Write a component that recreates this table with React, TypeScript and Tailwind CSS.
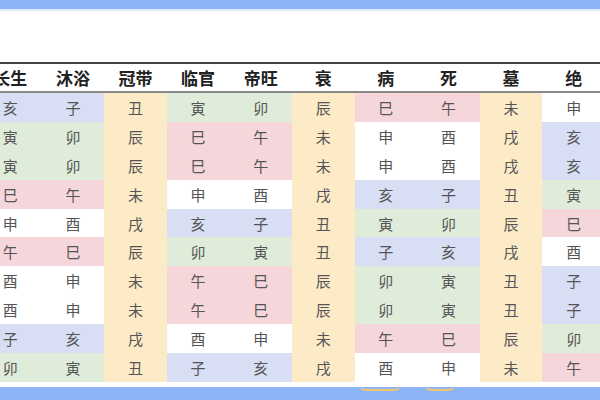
const HEADERS = ["长生", "沐浴", "冠带", "临官", "帝旺", "衰", "病", "死", "墓", "绝"];

const ROWS = [
  "亥子丑寅卯辰巳午未申",
  "寅卯辰巳午未申酉戌亥",
  "寅卯辰巳午未申酉戌亥",
  "巳午未申酉戌亥子丑寅",
  "申酉戌亥子丑寅卯辰巳",
  "午巳辰卯寅丑子亥戌酉",
  "酉申未午巳辰卯寅丑子",
  "酉申未午巳辰卯寅丑子",
  "子亥戌酉申未午巳辰卯",
  "卯寅丑子亥戌酉申未午",
];

// colour by branch element
const CELL: Record<string, string> = {
  亥: "bg-[#d8def3]",
  子: "bg-[#d8def3]",
  寅: "bg-[#dfecda]",
  卯: "bg-[#dfecda]",
  巳: "bg-[#f5d6db]",
  午: "bg-[#f5d6db]",
  申: "bg-white",
  酉: "bg-white",
  辰: "bg-[#fdebc8]",
  戌: "bg-[#fdebc8]",
  丑: "bg-[#fdebc8]",
  未: "bg-[#fdebc8]",
};

export default function App() {
  return (
    <div
      className="w-[600px] h-[400px] overflow-hidden bg-white flex flex-col"
      style={{ fontFamily: '"Noto Sans CJK SC", "Noto Sans", sans-serif' }}
    >
      <div className="h-[9px] bg-[#8cb3f6] shrink-0" />
      <div className="h-[2px] bg-[#dfe8fb] shrink-0" />
      <div className="h-[51px] shrink-0" />
      <div className="ml-[-21px] w-[626px] shrink-0">
        <div className="grid grid-cols-[repeat(10,62.6px)] h-[31px] border-y-2 border-t-[#444] border-b-[#888]">
          {HEADERS.map((h) => (
            <div
              key={h}
              className="flex items-center justify-center text-[17px] font-bold text-[#222] leading-none"
            >
              {h}
            </div>
          ))}
        </div>
        {ROWS.map((row, i) => (
          <div key={i} className="grid grid-cols-[repeat(10,62.6px)] h-[28.9px]">
            {row.split("").map((c, j) => (
              <div
                key={j}
                className={`${CELL[c]} flex items-center justify-center text-[15px] text-[#555] leading-none`}
              >
                {c}
              </div>
            ))}
          </div>
        ))}
      </div>
      <div className="h-[5px] shrink-0" />
      <div className="relative flex-1 bg-[#8cb3f6]">
        <div className="absolute left-[360px] top-[-2px] w-[40px] h-[6px] rounded-b-full border-b-2 border-[#f3c66a]" />
        <div className="absolute left-[425px] top-[-2px] w-[30px] h-[6px] rounded-b-full border-b-2 border-[#f3c66a]" />
      </div>
    </div>
  );
}
